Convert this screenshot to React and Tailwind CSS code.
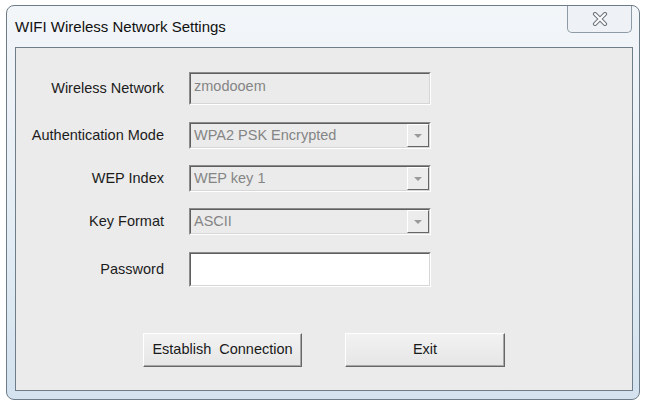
import React from 'react';

const font = { fontFamily: '"Liberation Sans", Arial, sans-serif' };

function Sunken({ white, children }) {
  return (
    <div className="border border-t-[#8c8c8c] border-l-[#8c8c8c] border-b-white border-r-white w-[242px] h-full">
      <div className={`h-full border border-t-[#5f5f5f] border-l-[#5f5f5f] border-b-[#d6d6d6] border-r-[#d6d6d6] flex items-center ${white ? 'bg-white' : 'bg-[#ebebeb]'}`}>
        {children}
      </div>
    </div>
  );
}

function Combo({ value }) {
  return (
    <Sunken>
      <span className="flex-1 pl-[3px] text-[14.5px] text-[#858585] leading-none">{value}</span>
      <div className="h-full w-[22px] flex items-center justify-center border border-t-white border-l-white border-b-[#666] border-r-[#666] bg-[#ececec]">
        <div className="w-0 h-0 border-l-[4px] border-r-[4px] border-t-[4px] border-l-transparent border-r-transparent border-t-[#9a9a9a]" />
      </div>
    </Sunken>
  );
}

function Row({ label, h, mt, children }) {
  return (
    <div className={`flex items-center ${h} ${mt}`}>
      <div className="w-[148px] text-right text-[14.5px] text-[#1c1c1c] whitespace-nowrap">{label}</div>
      <div className="ml-[25px] h-full flex">{children}</div>
    </div>
  );
}

function Btn({ w, children }) {
  return (
    <button className={`${w} h-[34px] border border-t-white border-l-white border-b-[#666] border-r-[#666] bg-gradient-to-b from-[#f2f2f2] to-[#e6e6e6] text-[14.5px] text-[#1a1a1a] shadow-[inset_-1px_-1px_0_#a8a8a8]`}>
      {children}
    </button>
  );
}

export default function App() {
  return (
    <div className="w-[645px] h-[415px] bg-white overflow-hidden" style={font}>
      <div className="ml-[6px] mt-[5px] w-[634px] h-[395px] rounded-[8px] border border-[#6d7c89] bg-gradient-to-b from-[#f3f6f9] via-[#e6eef5] to-[#d3e2ee] flex flex-col">
        <div className="h-[41px] flex items-start justify-between">
          <div className="pl-[8px] pt-[13px] text-[15px] text-[#111] leading-none">WIFI Wireless Network Settings</div>
          <div className="mr-[7px] w-[65px] h-[27px] rounded-b-[5px] border border-t-0 border-[#8e9aa5] bg-[#eef2f6] flex items-center justify-center">
            <svg width="16" height="14" viewBox="0 0 16 14">
              <path d="M3 2 L13 12 M13 2 L3 12" stroke="#6f7780" strokeWidth="4.2" strokeLinecap="round" fill="none" />
              <path d="M3 2 L13 12 M13 2 L3 12" stroke="#ffffff" strokeWidth="2" strokeLinecap="round" fill="none" />
            </svg>
          </div>
        </div>
        <div className="ml-[8px] w-[618px] h-[344px] border border-[#6f7d89] bg-[#ebebeb] flex flex-col">
          <Row label="Wireless Network" h="h-[33px]" mt="mt-[24px]">
            <Sunken>
              <span className="self-start pt-[5px] pl-[3px] text-[14.5px] text-[#858585] leading-none">zmodooem</span>
            </Sunken>
          </Row>
          <Row label="Authentication Mode" h="h-[27px]" mt="mt-[17px]">
            <Combo value="WPA2 PSK Encrypted" />
          </Row>
          <Row label="WEP Index" h="h-[27px]" mt="mt-[16px]">
            <Combo value="WEP key 1" />
          </Row>
          <Row label="Key Format" h="h-[27px]" mt="mt-[16px]">
            <Combo value="ASCII" />
          </Row>
          <Row label="Password" h="h-[35px]" mt="mt-[17px]">
            <Sunken white />
          </Row>
          <div className="mt-[46px] ml-[127px] flex gap-[43px]">
            <Btn w="w-[159px]">Establish&nbsp; Connection</Btn>
            <Btn w="w-[160px]">Exit</Btn>
          </div>
        </div>
      </div>
    </div>
  );
}
